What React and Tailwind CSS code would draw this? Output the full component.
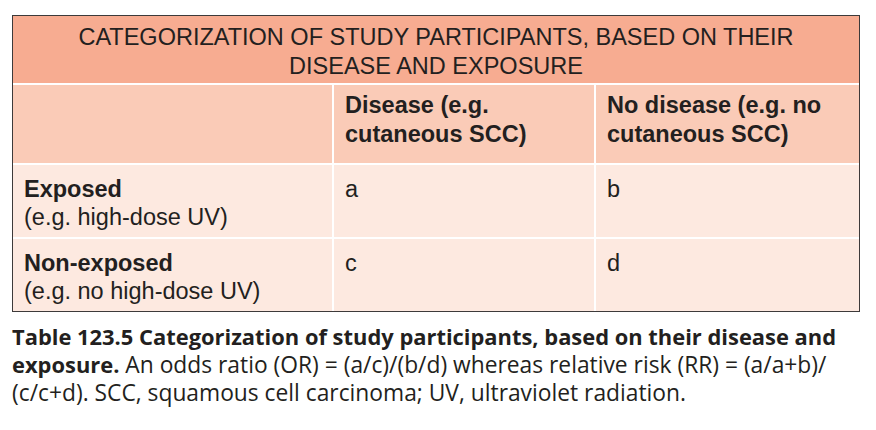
import React from "react";

const rows = [
  { label: "Exposed", note: "(e.g. high-dose UV)", a: "a", b: "b" },
  { label: "Non-exposed", note: "(e.g. no high-dose UV)", a: "c", b: "d" },
];

const App = () => {
  return (
    <div className="min-h-screen bg-white pt-[15px] pl-[12px] text-[#231f20]">
      {/* Table */}
      <div
        className="w-[848px] border border-[#3d3a3a] bg-white"
        style={{ fontFamily: '"Liberation Sans", Arial, sans-serif' }}
      >
        <div className="grid grid-cols-[319px_260px_263px] gap-[2px]">
          <div className="col-span-3 h-[67px] bg-[#f7ac91] pt-[7px] text-center text-[23.5px] leading-[29px] whitespace-nowrap">
            CATEGORIZATION OF STUDY PARTICIPANTS, BASED ON THEIR
            <br />
            DISEASE AND EXPOSURE
          </div>

          <div className="h-[78px] bg-[#facbb7]" />
          <div className="h-[78px] bg-[#facbb7] pt-[6px] px-[11px] text-[23.5px] font-bold leading-[29px] whitespace-nowrap">
            Disease (e.g.
            <br />
            cutaneous SCC)
          </div>
          <div className="h-[78px] bg-[#facbb7] pt-[6px] px-[11px] text-[23.5px] font-bold leading-[29px] whitespace-nowrap">
            No disease (e.g. no
            <br />
            cutaneous SCC)
          </div>

          {rows.map((r) => (
            <React.Fragment key={r.label}>
              <div className="h-[72px] bg-[#fde9e0] pt-[10px] px-[11px] text-[23.5px] leading-[28px] whitespace-nowrap">
                <div className="font-bold">{r.label}</div>
                <div>{r.note}</div>
              </div>
              <div className="h-[72px] bg-[#fde9e0] pt-[10px] px-[11px] text-[23.5px] leading-[28px]">
                {r.a}
              </div>
              <div className="h-[72px] bg-[#fde9e0] pt-[10px] px-[11px] text-[23.5px] leading-[28px]">
                {r.b}
              </div>
            </React.Fragment>
          ))}
        </div>
      </div>

      {/* Caption */}
      <p
        className="mt-[11px] text-[22.8px] leading-[28px] whitespace-nowrap"
        style={{ fontFamily: '"Open Sans", sans-serif' }}
      >
        <span className="font-bold text-[21.9px]">
          Table 123.5 Categorization of study participants, based on their disease and
          <br />
          exposure.
        </span>{" "}
        An odds ratio (OR) = (a/c)/(b/d) whereas relative risk (RR) = (a/a+b)/
        <br />
        (c/c+d). SCC, squamous cell carcinoma; UV, ultraviolet radiation.
      </p>
    </div>
  );
};

export default App;
